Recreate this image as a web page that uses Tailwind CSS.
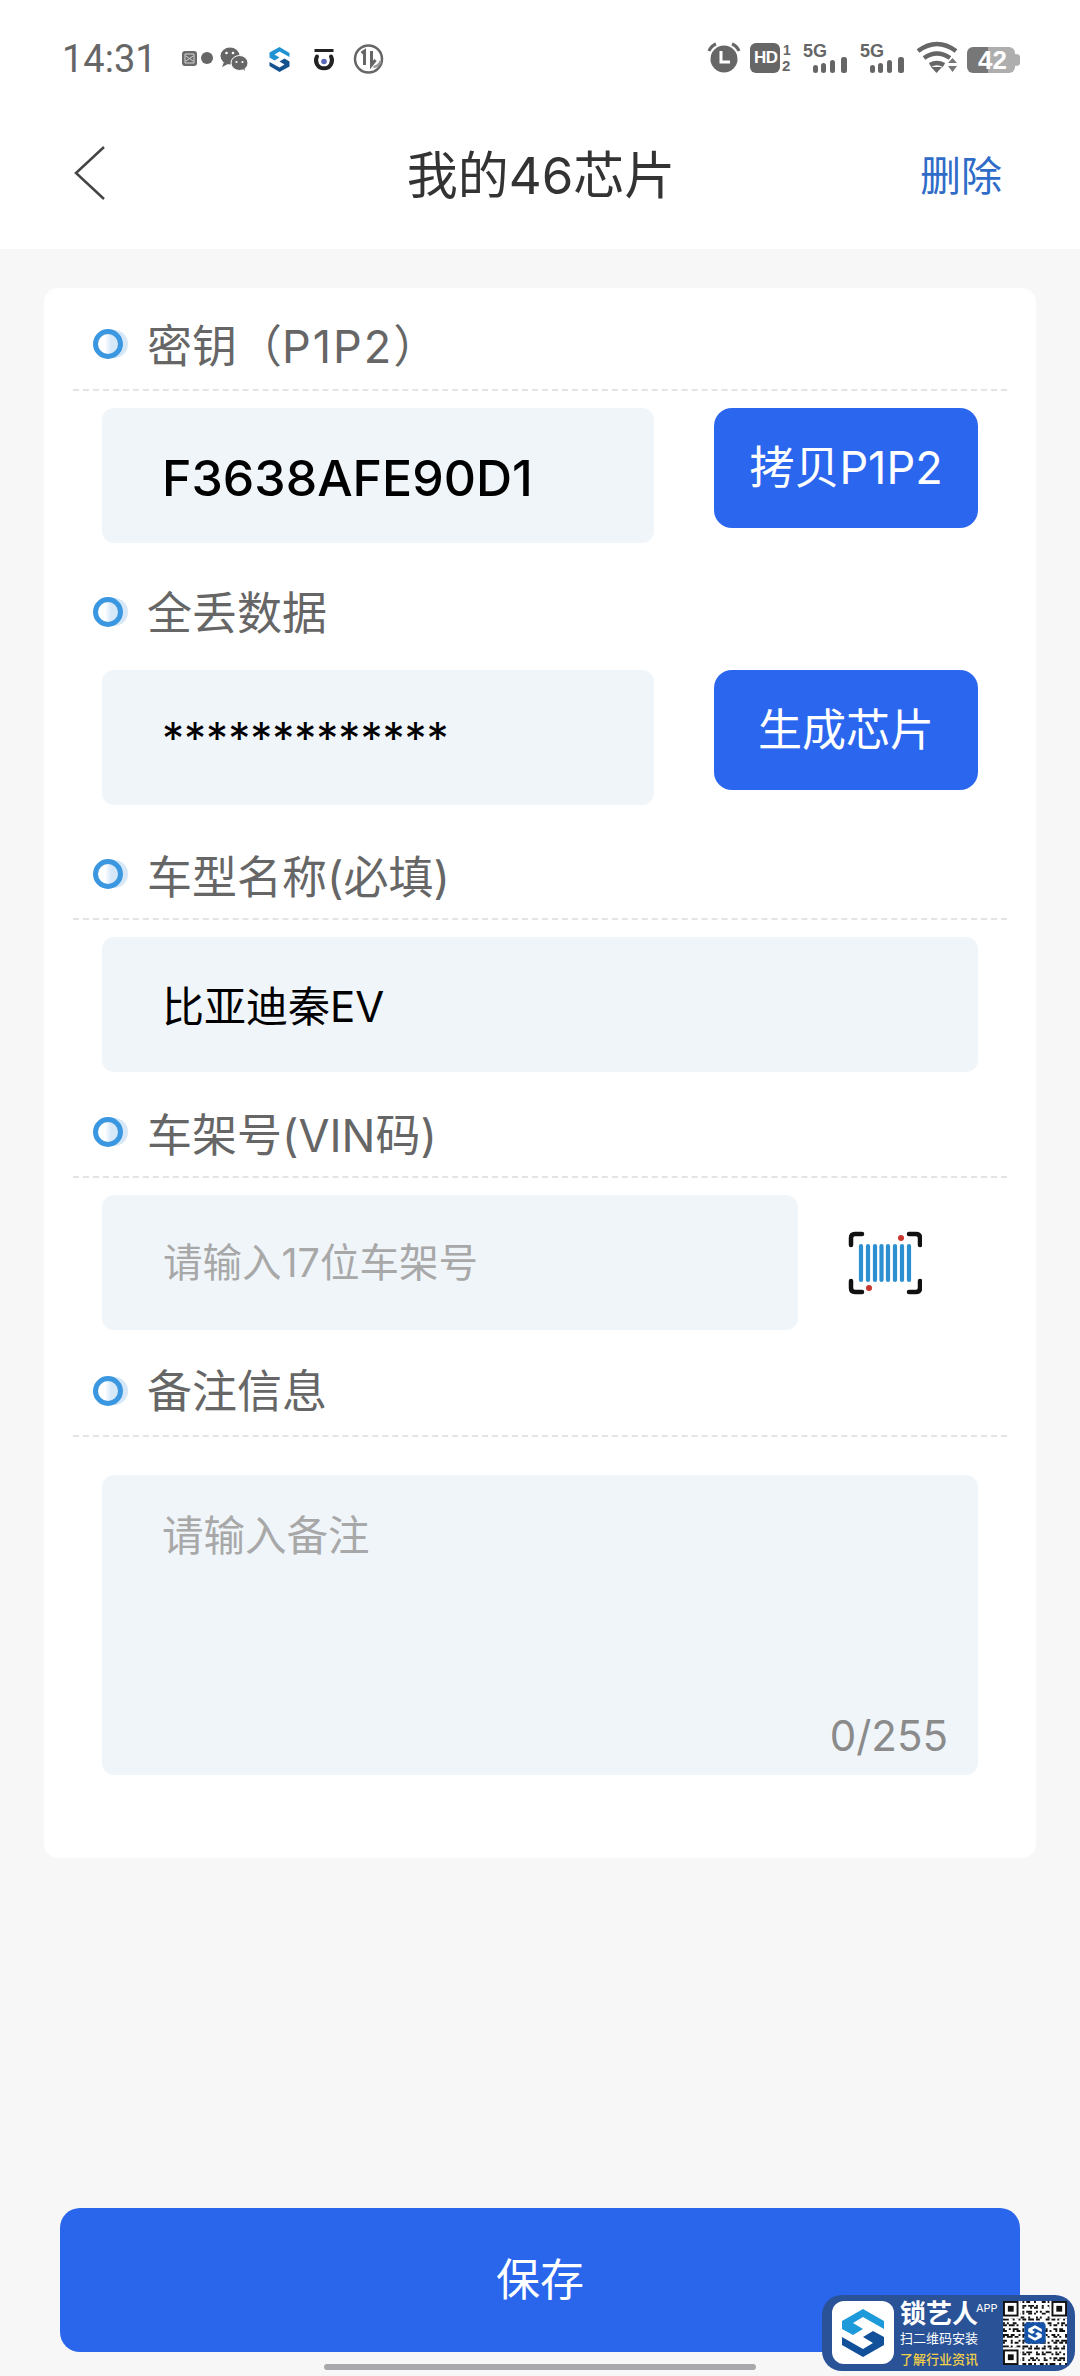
<!DOCTYPE html>
<html lang="zh">
<head>
<meta charset="utf-8">
<script src="https://cdn.jsdelivr.net/npm/@tailwindcss/browser@4"></script>
</head>
<body class="m-0">
<div class="relative w-[1080px] h-[2376px] overflow-hidden bg-[#f7f7f8] font-['Inter','Noto_Sans_CJK_SC',sans-serif]">
  <!-- header -->
  <div class="bg-white h-[249px]">
    <div class="relative h-[116px] flex items-center text-[#666]">
      <span class="absolute left-[62px] top-[34px] text-[38px] leading-[50px] font-['Roboto',sans-serif] text-[#666]">14:31</span>
      <svg class="absolute left-[170px] top-[36px]" width="220" height="44" viewBox="170 36 220 44">
        <g transform="translate(6 1)">
          <rect x="176" y="50" width="15" height="15" rx="3" fill="#6a6a6a"/>
          <path d="M179 53h9v9h-9z M180 55l7 5 M187 55l-7 5" fill="none" stroke="#d8d8d8" stroke-width="1"/>
          <circle cx="201" cy="57" r="6" fill="#666"/>
        </g>
        <g transform="translate(8 1)">
          <ellipse cx="222" cy="55" rx="9.5" ry="8.5" fill="#666"/>
          <path d="M216 61l-2 5 6-3z" fill="#666"/>
          <circle cx="218.500" cy="52" r="1.300" fill="#fff"/><circle cx="225" cy="52" r="1.300" fill="#fff"/>
          <ellipse cx="231.500" cy="62" rx="8.500" ry="7.500" stroke="#fff" stroke-width="1" fill="#666"/>
          <path d="M235 68l2 2-.5-3z" fill="#666"/>
          <circle cx="228.500" cy="61" r="1.100" fill="#fff"/><circle cx="234.500" cy="61" r="1.100" fill="#fff"/>
        </g>
        <g transform="translate(9.500 1)">
          <path d="M270 46l10 6v4l-10-5.500-5 3 5 3-5 3-5-3v-5z" fill="#2192d2"/>
          <path d="M270 71l-10-6v-4l10 5.500 5-3-5-3 5-3 5 3v5z" fill="#14528f"/>
        </g>
        <g transform="translate(10.500 1)">
          <rect x="304" y="48" width="19" height="3" fill="#222"/>
          <path d="M306.500 55.500a8 8 0 1 0 14 0" fill="none" stroke="#222" stroke-width="4" stroke-linecap="round"/>
          <circle cx="313.500" cy="60.500" r="2.800" fill="#5a68b8"/>
        </g>
        <g transform="translate(11.500 1)">
          <circle cx="357" cy="58" r="13.500" fill="none" stroke="#666" stroke-width="2.500"/>
          <path d="M350 52l3-2v14 M360 50v14l4-5" fill="none" stroke="#666" stroke-width="3"/>
          <path d="M362 66q6-1 7-6" fill="none" stroke="#999" stroke-width="2.500"/>
        </g>
      </svg>
      <svg class="absolute left-[700px] top-[36px]" width="330" height="44" viewBox="700 36 330 44">
        <g transform="translate(5 0)">
          <circle cx="719" cy="59" r="13.500" fill="#666"/>
          <path d="M716 51v11h9" fill="none" stroke="#fff" stroke-width="3"/>
          <path d="M704 51q2-5 7-7 M734 51q-2-5-7-7" fill="none" stroke="#666" stroke-width="3"/>
        </g>
        <rect x="750" y="43" width="30" height="30" rx="6" fill="#666"/>
        <g fill="#666">
          <rect x="813" y="65" width="5" height="8" rx="2.500"/><rect x="821" y="63" width="5" height="10" rx="2.500"/><rect x="830" y="60" width="5" height="13" rx="2.500"/><rect x="841" y="57" width="6" height="16" rx="2.500"/>
          <rect x="870" y="65" width="5" height="8" rx="2.500"/><rect x="878" y="63" width="5" height="10" rx="2.500"/><rect x="887" y="60" width="5" height="13" rx="2.500"/><rect x="898" y="57" width="6" height="16" rx="2.500"/>
        </g>
        <path d="M918 51q19-14 38 0 M924 58q13-9 26 0 M930 65q7-4 14 0" fill="none" stroke="#666" stroke-width="4.500"/>
        <path d="M931 67h11l-5.500 6z" fill="#666"/>
        <path d="M948 63h9l-4.500-5z M948 66h9l-4.500 6z" fill="#777"/>
        <path d="M973 47h15v26h-15a6 6 0 0 1-6-6v-14a6 6 0 0 1 6-6z" fill="#777"/>
        <path d="M988 47h21a6 6 0 0 1 6 6v14a6 6 0 0 1-6 6h-21z" fill="#aeaeae"/>
        <path d="M1015 54q5 0 5 3v6q0 3-5 3z" fill="#aeaeae"/>
      </svg>
      <span class="absolute left-[754px] top-[48px] text-[17px] leading-[20px] font-black text-white font-['Liberation_Sans',sans-serif] tracking-[-0.5px]">HD</span>
      <span class="absolute left-[783px] top-[42px] text-[14px] leading-[16px] font-bold font-['Liberation_Sans',sans-serif]">1</span>
      <span class="absolute left-[782px] top-[58px] text-[15px] leading-[16px] font-bold font-['Liberation_Sans',sans-serif]">2</span>
      <span class="absolute left-[803px] top-[41px] text-[18px] leading-[20px] font-bold font-['Liberation_Sans',sans-serif]">5G</span>
      <span class="absolute left-[860px] top-[41px] text-[18px] leading-[20px] font-bold font-['Liberation_Sans',sans-serif]">5G</span>
      <span class="absolute left-[978px] top-[46px] text-[26px] leading-[28px] font-bold text-white font-['Liberation_Sans',sans-serif]">42</span>
    </div>
    <div class="relative h-[133px] pb-[14px] pl-[2px] flex items-center justify-center">
      <svg class="absolute left-[71px] top-[27px]" width="36" height="60" viewBox="0 0 36 60"><path d="M33 4 L5 30 L33 56" fill="none" stroke="#444" stroke-width="2.500"/></svg>
      <span class="text-[51px] leading-[64px] text-[#333]">我的46芯片</span>
      <span class="absolute right-[78px] top-[35px] text-[41px] leading-[50px] text-[#2f6cc8]">删除</span>
    </div>
  </div>

  <!-- card -->
  <div class="mt-[39px] mx-[44px] h-[1570px] bg-white rounded-[14px] px-[29px]">
    <div class="h-[103px] flex items-end gap-[24px] pl-[20px] pb-[20px] border-b-2 border-dashed border-[#e4e4e4]">
      <span class="block w-[30px] h-[30px] mb-[10px] rounded-full border-[5px] border-[#3a97e0] bg-[linear-gradient(90deg,#fff_35%,#d6e8f8_65%)] shadow-[6px_0_0_-1px_#d6e8f8]"></span>
      <span class="text-[45px] leading-[44px] text-[#666]">密钥（<span class="tracking-[2px]">P1P2</span>）</span>
    </div>
    <div class="mt-[17px] flex justify-between px-[29px]">
      <div class="w-[552px] h-[135px] pt-[6px] bg-[#f0f5fa] rounded-[12px] pl-[60px] flex items-center text-[50px] font-medium text-black">F3638AFE90D1</div>
      <div class="w-[264px] h-[120px] bg-[#2b67ee] rounded-[18px] flex items-center justify-center text-[45px] text-white">拷贝P1P2</div>
    </div>

    <div class="h-[127px] flex items-end gap-[24px] pl-[20px] pb-[34px]">
      <span class="block w-[30px] h-[30px] mb-[9px] rounded-full border-[5px] border-[#3a97e0] bg-[linear-gradient(90deg,#fff_35%,#d6e8f8_65%)] shadow-[6px_0_0_-1px_#d6e8f8]"></span>
      <span class="text-[45px] leading-[44px] text-[#666]">全丢数据</span>
    </div>
    <div class="flex justify-between px-[29px]">
      <div class="w-[552px] h-[135px] bg-[#f0f5fa] rounded-[12px] pl-[60px] flex items-center text-[44px] text-black">*************</div>
      <div class="w-[264px] h-[120px] bg-[#2b67ee] rounded-[18px] flex items-center justify-center text-[44px] text-white">生成芯片</div>
    </div>

    <div class="h-[115px] flex items-end gap-[24px] pl-[20px] pb-[18px] border-b-2 border-dashed border-[#e4e4e4]">
      <span class="block w-[30px] h-[30px] mb-[11px] rounded-full border-[5px] border-[#3a97e0] bg-[linear-gradient(90deg,#fff_35%,#d6e8f8_65%)] shadow-[6px_0_0_-1px_#d6e8f8]"></span>
      <span class="text-[45px] leading-[44px] text-[#666]">车型名称(必填)</span>
    </div>
    <div class="mt-[17px] mx-[29px] h-[135px] pt-[3px] bg-[#f0f5fa] rounded-[12px] pl-[60px] flex items-center text-[42px] text-black">比亚迪秦EV</div>

    <div class="h-[106px] flex items-end gap-[24px] pl-[20px] pb-[18px] border-b-2 border-dashed border-[#e4e4e4]">
      <span class="block w-[30px] h-[30px] mb-[11px] rounded-full border-[5px] border-[#3a97e0] bg-[linear-gradient(90deg,#fff_35%,#d6e8f8_65%)] shadow-[6px_0_0_-1px_#d6e8f8]"></span>
      <span class="text-[45px] leading-[44px] text-[#666]">车架号(VIN码)</span>
    </div>
    <div class="mt-[17px] flex items-center px-[29px]">
      <div class="w-[696px] h-[135px] pt-[3px] bg-[#f0f5fa] rounded-[12px] pl-[61px] flex items-center text-[39.5px] text-[#a8a8a8]">请输入17位车架号</div>
      <svg class="ml-[50px]" width="74" height="64" viewBox="0 0 74 64">
        <g fill="none" stroke="#111" stroke-width="4.500" stroke-linecap="round">
          <path d="M3 14V7q0-4 4-4h7 M61 3h7q4 0 4 4v7 M3 50v7q0 4 4 4h7 M72 50v7q0 4-4 4h-7"/>
        </g>
        <g stroke="#2b8fd0" stroke-width="4.200" stroke-linecap="round">
          <path d="M13 15V49M20 15V49M27 15V49M33.500 15V49M40 15V49M47 15V49M54 15V49M61 15V49"/>
        </g>
        <circle cx="53" cy="7" r="3" fill="#c8362e"/><circle cx="21" cy="57" r="3" fill="#c8362e"/>
      </svg>
    </div>

    <div class="h-[107px] flex items-end gap-[24px] pl-[20px] pb-[21px] border-b-2 border-dashed border-[#e4e4e4]">
      <span class="block w-[30px] h-[30px] mb-[8px] rounded-full border-[5px] border-[#3a97e0] bg-[linear-gradient(90deg,#fff_35%,#d6e8f8_65%)] shadow-[6px_0_0_-1px_#d6e8f8]"></span>
      <span class="text-[45px] leading-[44px] text-[#666]">备注信息</span>
    </div>
    <div class="relative mt-[38px] mx-[29px] h-[300px] bg-[#f0f5fa] rounded-[12px] pl-[60px] pt-[33px] text-[41.5px] leading-[56px] text-[#a8a8a8]">
      请输入备注
      <span class="absolute right-[30px] bottom-[11px] text-[42px] text-[#8b8b8b]">0/255</span>
    </div>
  </div>

  <!-- save -->
  <div class="mt-[350px] mx-[60px] h-[144px] bg-[#2a66ec] rounded-[20px] flex items-center justify-center text-[44px] text-white">保存</div>

  <!-- floating badge -->
  <div class="absolute left-[822px] top-[2295px] w-[253px] h-[76px] rounded-[20px] bg-[#2a5296]">
    <div class="absolute left-[10px] top-[6px] w-[62px] h-[63px] rounded-[12px] bg-white flex items-center justify-center">
      <svg width="46" height="50" viewBox="0 0 46 50">
        <path d="M23 1L44 13V21L23 9 13 15 23 21 13 27 2 21V13z" fill="#1d9ad9"/>
        <path d="M23 49L2 37V29L23 41 33 35 23 29 33 23 44 29V37z" fill="#12509a"/>
      </svg>
    </div>
    <span class="absolute left-[78px] top-[3px] text-[26px] leading-[32px] font-bold text-white whitespace-nowrap">锁艺人</span>
    <span class="absolute left-[154px] top-[5px] text-[11px] leading-[16px] text-white">APP</span>
    <span class="absolute left-[78px] top-[33px] text-[13px] leading-[20px] text-white whitespace-nowrap">扫二维码安装</span>
    <span class="absolute left-[78px] top-[54px] text-[13px] leading-[20px] font-medium text-[#f2cf4a] whitespace-nowrap">了解行业资讯</span>
    <svg class="absolute left-[181px] top-[6px] bg-white" width="64" height="64" viewBox="0 0 33 33">
      <g stroke="#111" stroke-width="1" fill="none">
        <path d="M0 .5H33" stroke-dasharray="2 1 1 2 3 1 1 1 2 2 1 3 2 1 1 2"/>
        <path d="M0 2.500H33" stroke-dasharray="1 2 2 1 1 3 2 1 3 1 1 2 1 2"/>
        <path d="M0 3.500H33" stroke-dasharray="3 1 1 1 2 2 1 3 1 1 2 2 1"/>
        <path d="M0 5.500H33" stroke-dasharray="1 1 2 3 1 2 1 1 3 2 1"/>
        <path d="M0 6.500H33" stroke-dasharray="2 2 1 1 3 1 1 2 2 1 1 3"/>
        <path d="M0 8.500H33" stroke-dasharray="1 3 2 1 1 1 2 2 1 3 1 1"/>
        <path d="M0 9.500H33" stroke-dasharray="3 2 1 2 1 1 2 1 3 1 2"/>
        <path d="M0 11.500H33" stroke-dasharray="1 1 1 2 2 3 1 1 2 1 1 2"/>
        <path d="M0 12.500H33" stroke-dasharray="2 1 3 1 1 2 2 1 1 3 1"/>
        <path d="M0 14.500H33" stroke-dasharray="1 2 1 1 3 2 1 2 2 1 2"/>
        <path d="M0 15.500H33" stroke-dasharray="2 3 1 1 2 1 1 3 1 2 1"/>
        <path d="M0 17.500H33" stroke-dasharray="3 1 2 2 1 1 3 1 1 2 2"/>
        <path d="M0 18.500H33" stroke-dasharray="1 1 3 1 2 2 1 1 2 3 1"/>
        <path d="M0 20.500H33" stroke-dasharray="2 2 1 3 1 1 2 1 3 1"/>
        <path d="M0 21.500H33" stroke-dasharray="1 3 1 1 2 2 1 2 1 1 3"/>
        <path d="M0 23.500H33" stroke-dasharray="3 1 1 2 2 1 3 1 1 2 1"/>
        <path d="M0 24.500H33" stroke-dasharray="1 2 2 1 1 3 1 2 2 1 3"/>
        <path d="M0 26.500H33" stroke-dasharray="2 1 1 3 2 1 1 1 3 2 1"/>
        <path d="M0 27.500H33" stroke-dasharray="1 2 3 1 1 2 2 1 1 3 2"/>
        <path d="M0 29.500H33" stroke-dasharray="3 1 2 1 1 2 1 3 2 1 1"/>
        <path d="M0 30.500H33" stroke-dasharray="1 1 2 2 3 1 1 2 1 1 2"/>
        <path d="M0 32.500H33" stroke-dasharray="2 2 1 1 1 3 2 1 2 1 1"/>
      </g>
      <g fill="#fff"><rect x="0" y="0" width="9" height="9"/><rect x="24" y="0" width="9" height="9"/><rect x="0" y="24" width="9" height="9"/></g>
      <g fill="none" stroke="#111" stroke-width="1"><rect x=".5" y=".5" width="7" height="7"/><rect x="25.500" y=".5" width="7" height="7"/><rect x=".5" y="25.500" width="7" height="7"/></g>
      <g fill="#111"><rect x="2.500" y="2.500" width="3" height="3"/><rect x="27.500" y="2.500" width="3" height="3"/><rect x="2.500" y="27.500" width="3" height="3"/></g>
      <rect x="11" y="11" width="11" height="11" rx="2" fill="#1553a8"/>
      <path d="M16.500 12.500l3.500 2v1.500l-3.500-2-1.500 1 1.500 1-1.500 1-2-1.200v-1.500zM16.500 20.500l-3.500-2v-1.500l3.500 2 1.500-1-1.500-1 1.500-1 2 1.200v1.500z" fill="#fff"/>
    </svg>
  </div>

  <!-- home bar -->
  <div class="absolute left-[324px] top-[2364px] w-[432px] h-[6px] rounded-full bg-[#a9a9ad]"></div>
</div>
</body>
</html>
